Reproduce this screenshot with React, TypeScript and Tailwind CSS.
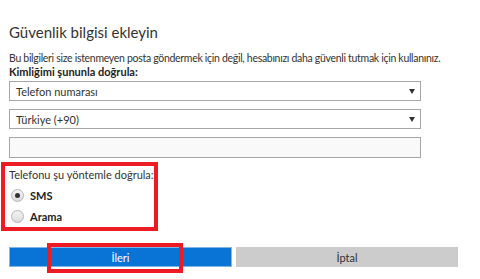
import React from "react";

const font = { fontFamily: 'Lato, "Noto Sans", sans-serif' };

function Select({ label }: { label: string }) {
  return (
    <div className="flex h-[20px] w-[412px] items-center justify-between border border-[#a6a6a6] bg-white pl-[6px] pr-[5px]">
      <span className="whitespace-nowrap text-[11px] leading-none text-[#333]">{label}</span>
      <svg width="6" height="5" viewBox="0 0 6 5">
        <path d="M0 0H6L3 5Z" fill="#333" />
      </svg>
    </div>
  );
}

function Radio({ checked, label }: { checked?: boolean; label: string }) {
  return (
    <div className="flex h-[13px] items-center gap-[6px]">
      <div className="flex h-[13px] w-[13px] items-center justify-center rounded-full border border-[#b5b5b5] bg-gradient-to-b from-[#f4f4f4] to-[#dcdcdc]">
        {checked && <div className="h-[5px] w-[5px] rounded-full bg-[#333]" />}
      </div>
      <span className="whitespace-nowrap text-[11px] font-bold leading-none text-[#222]">{label}</span>
    </div>
  );
}

export default function App() {
  return (
    <div className="h-[279px] w-[480px] overflow-hidden bg-white" style={font}>
      <div className="pl-[9px] pt-[22px]">
        <div className="h-[20px] whitespace-nowrap text-[15px] leading-[20px] text-[#333]">Güvenlik bilgisi ekleyin</div>
        <div className="mt-[10px] h-[13px] whitespace-nowrap text-[10.5px] leading-[13px] tracking-[-0.3px] text-[#333]">
          Bu bilgileri size istenmeyen posta göndermek için değil, hesabınızı daha güvenli tutmak için kullanınız.
        </div>
        <div className="h-[13px] whitespace-nowrap text-[11px] font-bold leading-[13px] text-[#222]">Kimliğimi şununla doğrula:</div>
        <div className="mt-[3px] flex flex-col gap-[8px]">
          <Select label="Telefon numarası" />
          <Select label="Türkiye (+90)" />
          <div className="h-[21px] w-[412px] border border-[#a6a6a6] bg-[#f9f9f9]" />
        </div>
      </div>
      <div className="ml-[1px] mt-[4px] flex h-[69px] w-[157px] flex-col border-[4px] border-[#ed1c24] pl-[4px] pt-[2px]">
        <div className="h-[13px] whitespace-nowrap text-[11px] leading-[13px] text-[#333]">Telefonu şu yöntemle doğrula:</div>
        <div className="mt-[8px] flex flex-col gap-[8px] pl-[2px]">
          <Radio checked label="SMS" />
          <Radio label="Arama" />
        </div>
      </div>
      <div className="ml-[9px] mt-[16px] flex gap-[4px]">
        <div className="relative flex h-[20px] w-[223px] items-center justify-center border border-[#7fb6ea] bg-[#0a74d6]">
          <span className="whitespace-nowrap text-[11px] leading-none text-white">İleri</span>
          <div className="absolute left-[37px] top-[-5px] h-[30px] w-[136px] border-[4px] border-[#ed1c24]" />
        </div>
        <div className="flex h-[20px] w-[222px] items-center justify-center bg-[#cccccc]">
          <span className="whitespace-nowrap text-[11px] leading-none text-[#333]">İptal</span>
        </div>
      </div>
    </div>
  );
}
